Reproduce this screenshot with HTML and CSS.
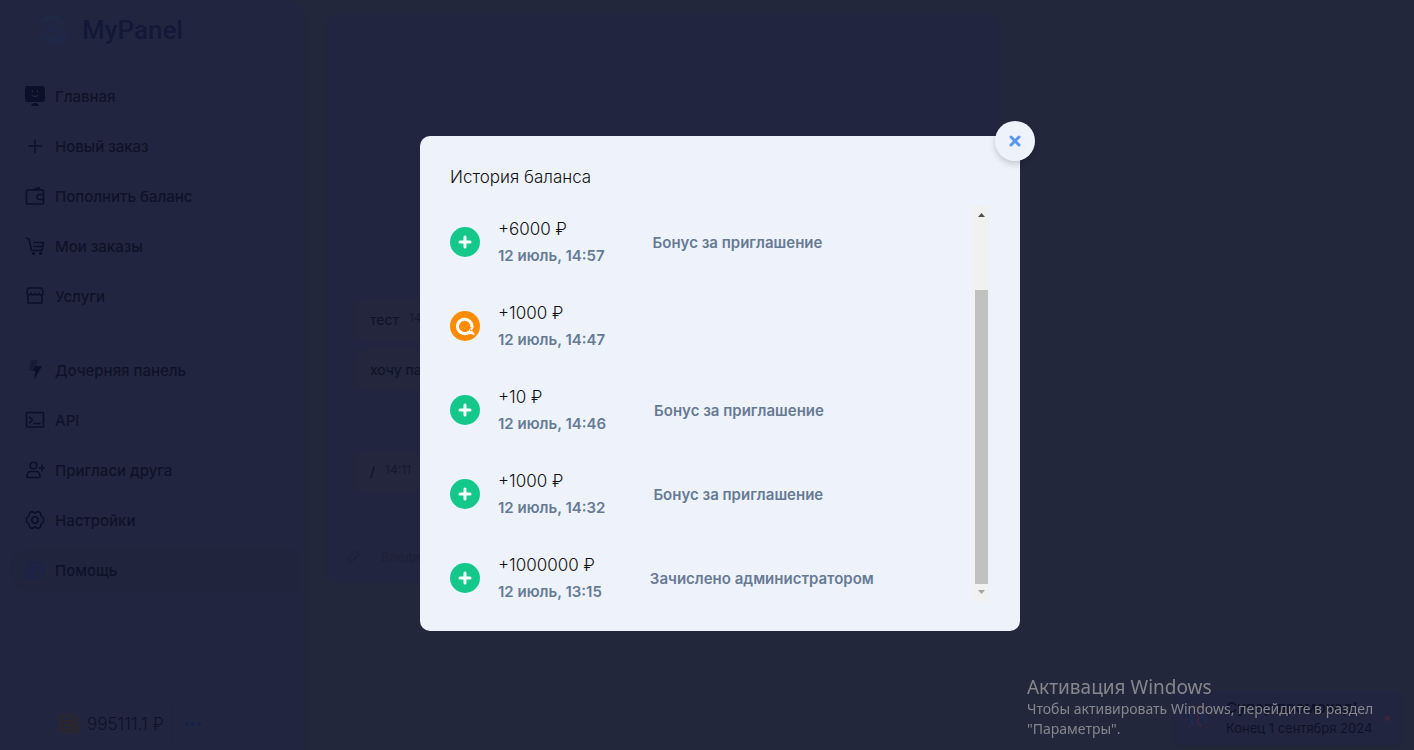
FILE: index.html
```html
<!DOCTYPE html>
<html lang="ru">
<head>
<meta charset="utf-8">
<title>MyPanel</title>
<link rel="stylesheet" href="styles.css">
</head>
<body>
<div class="app">
  <aside class="sidebar">
    <a class="brand" href="#">
      <svg class="brand-mark" viewBox="0 0 32 32"><path d="M2 8Q12-2 24 2L30 7 26 13 14 7z" fill="#212844"/><path d="M7 13 16 9 30 17V27Q28 32 18 31L2 22Q5 19 12 22L24 23z" fill="#202746"/></svg>
      <span>MyPanel</span>
    </a>
    <nav class="menu">
      <a class="item" href="#"><svg viewBox="0 0 20 20"><path d="M3 0h14a3 3 0 0 1 3 3v10a3 3 0 0 1-3 3H3a3 3 0 0 1-3-3V3a3 3 0 0 1 3-3zM6 20q1-3 4-3t4 3z" fill="#0b0f28"/><path d="M7.500 4v2.500M12.500 4v2.500M6.500 9q3.500 3 7 0" fill="none" stroke="#22253f" stroke-width="1.300"/></svg>Главная</a>
      <a class="item" href="#"><svg class="line" viewBox="0 0 20 20"><path d="M10 4v12.500M4 10h12.500"/></svg>Новый заказ</a>
      <a class="item" href="#"><svg class="line" viewBox="0 0 20 20"><path d="M2.500 4h15a1 1 0 0 1 1 1v12a1 1 0 0 1-1 1h-15a1 1 0 0 1-1-1V5a1 1 0 0 1 1-1zM8 4l6-2.500L15 4M18.500 8.500H14.500a2.300 2.300 0 0 0 0 5h4"/></svg>Пополнить баланс</a>
      <a class="item" href="#"><svg class="line" viewBox="0 0 20 20"><path d="M1.500 2 4 3.200 6.500 14.500H17L18.500 6.500H9M9 10.500h8"/><circle cx="8.500" cy="17.500" r=".8"/><circle cx="15.500" cy="17.500" r=".8"/></svg>Мои заказы</a>
      <a class="item" href="#"><svg class="line" viewBox="0 0 20 20"><path d="M4 2h12q2 1 2 5c0 2.500-4 2.500-4 0 0 2.500-4 2.500-4 0 0 2.500-4 2.500-4 0 0 2.500-4 2.500-4 0q0-4 2-5zM3 9v8h14V9"/></svg>Услуги</a>
    </nav>
    <nav class="menu menu-second">
      <a class="item" href="#"><svg viewBox="0 0 20 20"><path d="M6 0h7l-2 6-3 5H4z" fill="#171b35"/><path d="M10 6h7L9 20l1.500-9H8z" fill="#0b0f28"/></svg>Дочерняя панель</a>
      <a class="item" href="#"><svg class="line" viewBox="0 0 20 20"><rect x="1.500" y="2.500" width="17" height="14.500" rx="1"/><path d="m4.500 7 3 3-3 3M9 13.500h6"/></svg>API</a>
      <a class="item" href="#"><svg class="line" viewBox="0 0 20 20"><circle cx="8.500" cy="5.500" r="3.300"/><path d="M5 11.500h7Q15 12 15 17.500H2Q2 12 5 11.500zM17 5v6M14 8h6"/></svg>Пригласи друга</a>
      <a class="item" href="#"><svg class="line" viewBox="0 0 20 20"><path d="M7 1.500 10 3l3-1.500 2.500 1.500.5 3 2.500 2v4L16 14l-.5 3L13 18.500 10 17l-3 1.500L4.500 17 4 14l-2.500-2V8L4 6l.5-3z"/><circle cx="10" cy="10" r="3.200"/></svg>Настройки</a>
      <a class="item item-active" href="#"><svg class="line" viewBox="0 0 20 20"><path d="M1.500 18.500V10A8.500 8.500 0 1 1 10 18.500zM5.500 7.500h8M5.500 10.500h9M5.500 13.500h5"/></svg>Помощь</a>
    </nav>
    <div class="wallet">
      <svg class="coins" viewBox="0 0 22 20"><ellipse cx="9" cy="4" rx="8" ry="3"/><path d="M1 4v12q2 3 8 3h3M17 4v4M1 8q2 3 8 3l3-.5M1 12q2 3 8 3"/><circle cx="16" cy="13.500" r="5"/><circle cx="16" cy="13.500" r="1.500"/></svg>
      <span class="wallet-sum">995111.1 ₽</span>
      <button class="wallet-more" type="button" aria-label="Ещё"><i></i><i></i><i></i></button>
    </div>
  </aside>
  <main class="chat">
    <div class="bubble">тест <time>14:10</time></div>
    <div class="bubble">хочу панель <time>14:10</time></div>
    <div class="bubble bubble-late">/ <time>14:11</time></div>
    <form class="composer">
      <svg class="clip" viewBox="0 0 16 16"><path d="m13.500 6-6 6.500Q5 15 2.500 12.500T2.500 8l5.500-6q2.500-2 4.500 0t0 4L7.500 11Q6 12 5 10.500T5.500 8l4-4"/></svg>
      <input class="composer-text" type="text" placeholder="Введите сообщение" aria-label="Введите сообщение">
    </form>
  </main>
</div>

<aside class="promo">
  <svg class="promo-icon" viewBox="0 0 28 28"><g fill="none" stroke-width="2"><path d="M3 11q5 1 3 5t3 5" stroke="#1f2a58"/><path d="M9 10q5 2 3 6t4 6" stroke="#3a2342"/><path d="M16 9q-2 4 2 5t1 6" stroke="#1f2a58"/><path d="M5 3h17" stroke="#35292f"/></g><g fill="#3a2342"><circle cx="23" cy="9" r="1"/><circle cx="25" cy="16" r="1"/><circle cx="21" cy="24" r="1"/><circle cx="4" cy="22" r="1"/></g></svg>
  <div class="promo-body"><strong>Супер промокод!</strong><span>Конец 1 сентября 2024</span></div>
  <i class="promo-dot"></i>
</aside>

<div class="overlay">
  <section class="modal" role="dialog" aria-labelledby="modal-title">
    <button class="close" type="button" aria-label="Закрыть"><svg viewBox="0 0 12 12"><path d="m2 2 8 8M10 2l-8 8"/></svg></button>
    <h1 class="modal-title" id="modal-title">История баланса</h1>
    <div class="scroller">
      <ul class="history">
        <li class="entry"><span class="badge"><svg viewBox="0 0 30 30"><path d="M15 10v10M10 15h10"/></svg></span><div class="entry-main"><span class="sum">+6000 ₽</span><time class="date">12 июль, 14:57</time></div><span class="note">Бонус за приглашение</span></li>
        <li class="entry"><span class="badge badge-qiwi"><svg viewBox="0 0 30 30"><path class="ring" d="M18.500 21.500A7.200 7.200 0 1 1 21.800 16.500"/><path class="tail" d="M23.500 14.500q.2 3-1.500 4.500l.5 1.500q2.500 1.500 2.300 4-2-2-5.300-1.500-2.500.6-4 .2l2-2.700z"/><path class="drop" d="m16.500 17.500 2 .5.500 1.500-2-.5zM20 18.500l1.500.5v1.500l-1.500-.7z"/></svg></span><div class="entry-main"><span class="sum">+1000 ₽</span><time class="date">12 июль, 14:47</time></div></li>
        <li class="entry"><span class="badge"><svg viewBox="0 0 30 30"><path d="M15 10v10M10 15h10"/></svg></span><div class="entry-main"><span class="sum">+10 ₽</span><time class="date">12 июль, 14:46</time></div><span class="note">Бонус за приглашение</span></li>
        <li class="entry"><span class="badge"><svg viewBox="0 0 30 30"><path d="M15 10v10M10 15h10"/></svg></span><div class="entry-main"><span class="sum">+1000 ₽</span><time class="date">12 июль, 14:32</time></div><span class="note">Бонус за приглашение</span></li>
        <li class="entry"><span class="badge"><svg viewBox="0 0 30 30"><path d="M15 10v10M10 15h10"/></svg></span><div class="entry-main"><span class="sum">+1000000 ₽</span><time class="date">12 июль, 13:15</time></div><span class="note">Зачислено администратором</span></li>
      </ul>
      <div class="track" aria-hidden="true">
        <svg class="arrow" viewBox="0 0 17 17"><path d="M5 11 8.500 7l3.500 4z" fill="#505050"/></svg>
        <span class="thumb"></span>
        <svg class="arrow" viewBox="0 0 17 17"><path d="M5 6 8.500 10 12 6z" fill="#a3a3a3"/></svg>
      </div>
    </div>
  </section>
</div>

<div class="activation">
  <p class="activation-title">Активация Windows</p>
  <p class="activation-text">Чтобы активировать Windows, перейдите в раздел "Параметры".</p>
</div>
</body>
</html>
```
FILE: styles.css
```css
* { box-sizing: border-box; }

body {
  margin: 0;
  background: #23273c;
  color: #0e1229;
  font-family: Inter, "Liberation Sans", sans-serif;
  font-size: 15px;
  overflow: hidden;
}

a { color: inherit; text-decoration: none; }
button { border: 0; padding: 0; cursor: pointer; font: inherit; }
svg { display: block; flex: none; }

.app {
  display: grid;
  grid-template-columns: 306px minmax(0, 674px);
  column-gap: 20px;
  min-height: 100vh;
}

/* Sidebar */
.sidebar {
  display: flex;
  flex-direction: column;
  height: 100vh;
  padding: 12px 6px 0 10px;
  background: #22253f;
  border-radius: 0 20px 0 0;
}

.brand {
  display: flex;
  align-items: center;
  gap: 14px;
  height: 36px;
  margin-bottom: 26px;
  padding-left: 26px;
  color: #131838;
  font: 500 26px/36px Roboto, sans-serif;
}
.brand-mark { width: 32px; height: 32px; }

.menu { display: flex; flex-direction: column; gap: 6px; }
.menu-second { margin-top: 30px; }

.item {
  display: flex;
  align-items: center;
  gap: 10px;
  height: 44px;
  padding-left: 15px;
  border-radius: 22px 0 0 22px;
  font-weight: 500;
}
.item svg { width: 20px; height: 20px; }
.item-active { background: #20243d; }

.line {
  fill: none;
  stroke: #0b0f28;
  stroke-width: 1.5;
  stroke-linecap: round;
  stroke-linejoin: round;
}
.item-active .line { stroke: #1a2250; }

.wallet {
  display: flex;
  align-items: center;
  height: 40px;
  margin-top: auto;
  margin-bottom: 6px;
  padding-left: 49px;
}
.coins { width: 22px; height: 20px; fill: none; stroke: #2d272b; stroke-width: 2; }
.wallet-sum {
  padding: 0 8px 0 6px;
  border-right: 1px solid #20243b;
  font-size: 17px;
  font-weight: 300;
  line-height: 40px;
}
.wallet-more { display: flex; gap: 2px; padding: 12px; background: none; }
.wallet-more i { width: 4px; height: 4px; border-radius: 50%; background: #18214a; }

/* Support chat */
.chat {
  display: flex;
  flex-direction: column;
  align-items: flex-start;
  gap: 10px;
  height: 568px;
  margin-top: 15px;
  padding: 285px 30px 0 28px;
  background: #22253f;
  border-radius: 10px;
}
.bubble {
  display: flex;
  gap: 10px;
  padding: 0 10px 0 16px;
  background: #23263c;
  border-radius: 10px;
  font-size: 14px;
  line-height: 40px;
}
.bubble time { font-size: 12px; line-height: 35px; color: #15192f; }
.bubble-late { margin-top: 52px; }
.composer {
  display: flex;
  align-items: center;
  gap: 20px;
  width: 100%;
  margin-top: auto;
  margin-bottom: 16px;
  margin-left: -9px;
}
.clip { width: 16px; height: 16px; fill: none; stroke: #1b1f39; stroke-width: 1; }
.composer-text {
  flex: 1;
  padding: 0;
  border: 0;
  background: none;
  font: 13px/20px Inter, sans-serif;
}
.composer-text::placeholder { color: #1c2038; }

/* Promo card in the corner */
.promo {
  position: fixed;
  right: 10px;
  bottom: 4px;
  display: flex;
  align-items: center;
  gap: 12px;
  width: 232px;
  padding: 8px 14px;
  background: #22253f;
  border-radius: 10px;
}
.promo-icon { width: 28px; height: 28px; }
.promo-body { display: flex; flex: 1; flex-direction: column; line-height: 20px; font-size: 13px; white-space: nowrap; }
.promo-body strong { font-size: 15px; font-weight: 600; }
.promo-dot { width: 5px; height: 5px; border-radius: 50%; background: #40223b; }

/* Balance history */
.overlay {
  position: fixed;
  inset: 0;
  display: flex;
  align-items: flex-start;
  justify-content: center;
  padding: 136px 0 0 26px;
}
.modal {
  position: relative;
  width: 600px;
  padding: 30px;
  background: #eef3fb;
  border-radius: 10px;
}
.close {
  position: absolute;
  top: -15px;
  right: -15px;
  display: grid;
  place-items: center;
  width: 40px;
  height: 40px;
  border-radius: 50%;
  background: #eef3fb;
  box-shadow: 0 3px 6px rgba(0, 0, 0, .18);
}
.close svg {
  width: 12px;
  height: 12px;
  fill: none;
  stroke: #5b93f0;
  stroke-width: 3;
  stroke-linecap: round;
}
.modal-title {
  margin: 0 0 18px;
  color: #111;
  font-size: 17px;
  font-weight: 300;
  line-height: 22px;
}
.scroller { display: flex; max-height: 395px; overflow: hidden; }
.history {
  flex: 1;
  display: flex;
  flex-direction: column;
  gap: 34px;
  margin: 0;
  padding: 11px 0 0;
  list-style: none;
}
.entry { display: flex; align-items: center; }
.entry-main { display: flex; flex-direction: column; gap: 2px; margin: 0 48px 0 18px; }
.badge {
  width: 30px;
  height: 30px;
  border-radius: 50%;
  background: #14c88c;
}
.badge path { fill: none; stroke: #fff; stroke-width: 3; stroke-linecap: round; }
.badge-qiwi { background: #ff8c00; }
.badge-qiwi .ring { stroke-width: 3; stroke-linecap: butt; }
.badge-qiwi .tail { fill: #fff; stroke: none; }
.badge-qiwi .drop { fill: #ff8c00; stroke: none; }
.sum { color: #111; font-size: 17px; font-weight: 300; line-height: 25px; }
.date, .note { color: #677a94; font-size: 15px; font-weight: 600; line-height: 23px; }

.track {
  display: flex;
  flex-direction: column;
  width: 17px;
  background: #f1f1f1;
}
.arrow { width: 17px; height: 17px; }
.thumb { flex: 1; margin: 67px 2px 0; background: #c1c1c1; }

/* System activation notice */
.activation {
  position: fixed;
  right: 27px;
  bottom: 11px;
  width: 360px;
  color: #85878c;
  font-family: "Noto Sans", "Open Sans", sans-serif;
}
.activation p { margin: 0; }
.activation-title { font-size: 19px; line-height: 24px; }
.activation-text { font-size: 14px; line-height: 20px; }
```
